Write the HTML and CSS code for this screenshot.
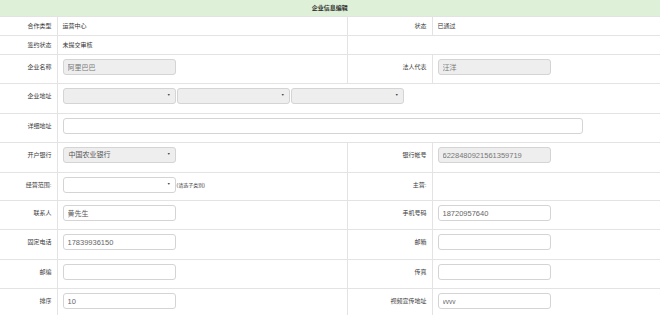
FILE: index.html
```html
<!DOCTYPE html>
<html lang="zh-CN">
<head>
<meta charset="utf-8">
<title>企业信息编辑</title>
<link rel="stylesheet" href="styles.css">
</head>
<body>
<table class="form">
  <colgroup>
    <col class="c1"><col class="c2"><col class="c3"><col class="c4">
  </colgroup>
  <tr class="head"><th colspan="4">企业信息编辑</th></tr>
  <tr class="txt">
    <td class="lbl">合作类型</td><td class="val">运营中心</td>
    <td class="lbl">状态</td><td class="val">已通过</td>
  </tr>
  <tr class="txt">
    <td class="lbl">签约状态</td><td class="val">未提交审核</td>
    <td class="val" colspan="2"></td>
  </tr>
  <tr class="inp">
    <td class="lbl">企业名称</td><td><input class="field dis big" value="阿里巴巴" disabled></td>
    <td class="lbl">法人代表</td><td><input class="field dis big" value="汪洋" disabled></td>
  </tr>
  <tr class="inp tall">
    <td class="lbl">企业地址</td>
    <td colspan="3">
      <div class="selects">
        <div class="sel dis"><span class="arr">▼</span></div>
        <div class="sel dis"><span class="arr">▼</span></div>
        <div class="sel dis"><span class="arr">▼</span></div>
      </div>
    </td>
  </tr>
  <tr class="inp">
    <td class="lbl">详细地址</td>
    <td colspan="3"><input class="field wide" value=""></td>
  </tr>
  <tr class="inp tall">
    <td class="lbl">开户银行</td>
    <td><div class="sel dis"><span class="stext">中国农业银行</span><span class="arr">▼</span></div></td>
    <td class="lbl">银行帐号</td><td><input class="field dis" value="6228480921561359719" disabled></td>
  </tr>
  <tr class="inp short">
    <td class="lbl">经营范围:</td>
    <td><div class="row"><div class="sel"><span class="arr">▼</span></div><span class="hint">(请选子类别)</span></div></td>
    <td class="lbl">主营:</td><td></td>
  </tr>
  <tr class="inp">
    <td class="lbl">联系人</td><td><input class="field big" value="黄先生"></td>
    <td class="lbl">手机号码</td><td><input class="field" value="18720957640"></td>
  </tr>
  <tr class="inp tall">
    <td class="lbl">固定电话</td><td><input class="field" value="17839936150"></td>
    <td class="lbl">邮箱</td><td><input class="field" value=""></td>
  </tr>
  <tr class="inp">
    <td class="lbl">邮编</td><td><input class="field" value=""></td>
    <td class="lbl">传真</td><td><input class="field" value=""></td>
  </tr>
  <tr class="inp">
    <td class="lbl">排序</td><td><input class="field" value="10"></td>
    <td class="lbl">视频宣传地址</td><td><input class="field small" value="vvvv"></td>
  </tr>
</table>
</body>
</html>
```
FILE: styles.css
```css
html, body {
  margin: 0;
  padding: 0;
  background: #fff;
}
body {
  font-family: "Liberation Sans", "Noto Sans CJK SC", sans-serif;
  font-size: 6px;
  color: #333;
}
.form {
  border-collapse: collapse;
  table-layout: fixed;
  width: 660px;
}
.c1 { width: 57px; }
.c2 { width: 290px; }
.c3 { width: 85px; }
.c4 { width: 228px; }
.form th, .form td {
  border: 1px solid #e3e3e3;
  padding: 0 5px;
}
.form tr > :first-child { border-left: none; }
.head th {
  background: #dff0d8;
  height: 16px;
  padding: 0;
  font-weight: bold;
  font-size: 6px;
  color: #2f2f2f;
  text-align: center;
  vertical-align: middle;
  line-height: 16px;
  border-top: none;
}
.txt td {
  height: 18px;
  padding: 0 5px;
  line-height: 10px;
  vertical-align: middle;
}
.lbl {
  text-align: right;
  color: #3a3a3a;
}
.val { color: #333; }
.inp td {
  vertical-align: top;
  padding-top: 4px;
  padding-bottom: 8px;
  line-height: 16px;
}
.inp.tall td { padding-bottom: 9px; }
.inp.short td { padding-bottom: 7px; }
.field {
  display: block;
  box-sizing: border-box;
  width: 113px;
  height: 16px;
  margin: 0;
  padding: 0 4px;
  border: 1px solid #d4d4d4;
  border-radius: 3px;
  background: #fff;
  font-family: "Liberation Sans", "Noto Sans CJK SC", sans-serif;
  font-size: 7.5px;
  color: #666;
  outline: none;
}
.field.big { font-size: 7px; color: #555; }
.field.small { font-size: 6.5px; }
.field.dis { background: #eee; color: #777; }
.field.wide { width: 520px; }
.selects {
  display: flex;
  gap: 1px;
}
.sel {
  box-sizing: border-box;
  width: 113px;
  height: 16px;
  border: 1px solid #d4d4d4;
  border-radius: 3px;
  background: #fff;
  display: flex;
  align-items: center;
  justify-content: space-between;
  padding: 0 4px 0 5px;
}
.sel.dis { background: #eee; }
.stext {
  font-size: 7px;
  color: #555;
}
.arr {
  font-size: 3.5px;
  color: #444;
  margin-left: auto;
  line-height: 1;
}
.row {
  display: flex;
  align-items: center;
}
.hint {
  font-size: 5px;
  color: #444;
  margin-left: 1px;
}
```
